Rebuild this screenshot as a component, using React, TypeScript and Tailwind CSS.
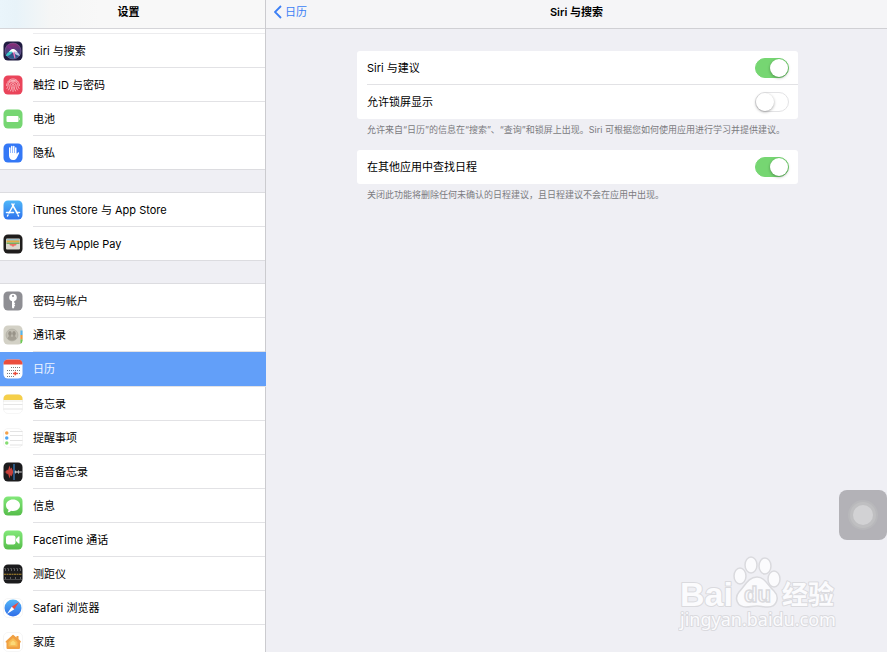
import React from "react";

interface TileProps {
  fill: string;
  stroke?: string;
  children?: React.ReactNode;
}

const Tile: React.FC<TileProps> = ({ fill, stroke = "none", children }) => (
  <svg viewBox="0 0 40 40" className="size-5 shrink-0" aria-hidden="true">
    <rect x="1" y="1" width="38" height="38" rx="9" fill={fill} stroke={stroke} />
    {children}
  </svg>
);

const SiriIcon = () => (
  <Tile fill="#1f1b40">
    <defs>
      <linearGradient id="siri" x1="0" y1="0" x2="0" y2="1">
        <stop offset="0" stopColor="#c4308c" />
        <stop offset="0.45" stopColor="#6a4a98" />
        <stop offset="1" stopColor="#1f7fb0" />
      </linearGradient>
    </defs>
    <circle cx="20" cy="20" r="16" fill="url(#siri)" opacity="0.7" />
    <circle cx="20" cy="20" r="16" fill="none" stroke="#8a6fa8" strokeWidth="1" />
    <path d="M21 18C14 18 8 24 5 30c8 0 13-4 16-12z" fill="#39d6d2" opacity="0.9" />
    <path d="M20 19c-8-3-12-8-13-12 7 2 11 6 13 12z" fill="#7a2d8c" />
    <path d="M20 18c6 1 12 6 14 12-8-1-12-5-14-12z" fill="#b9c8e8" />
    <path d="M19 20l4 15 2-2-3-14z" fill="#f279bd" />
    <path d="M12 22c3-5 6-6 8-6s5 1 9 6l-7-1-2 3-2-3z" fill="#fff" />
  </Tile>
);

const TouchIdIcon = () => (
  <Tile fill="#ea445a">
    <g fill="none" stroke="#fbc5cb" strokeWidth="1.7" strokeLinecap="round">
      <path d="M10 13c5-7 15-7 20 0" />
      <path d="M7 21c0-13 26-15 26 0" />
      <path d="M8 27c2-3 2-4 2-7 1-10 19-10 20 0 0 3 0 5 2 7" />
      <path d="M11 30c2-3 3-6 3-10 1-6 11-6 12 0 0 4 1 7 3 10" />
      <path d="M15 32c2-4 3-7 3-12 1-2 3-2 4 0 0 5 1 8 3 12" />
      <path d="M20 24v9" />
    </g>
  </Tile>
);

const BatteryIcon = () => (
  <Tile fill="#76d672">
    <rect x="7" y="14" width="24" height="12" rx="2" fill="#fff" />
    <path d="M32 17.500c2 .5 2 4.500 0 5z" fill="#fff" />
  </Tile>
);

const PrivacyIcon = () => (
  <Tile fill="#3478f6">
    <g fill="none" stroke="#fff" strokeWidth="3" strokeLinecap="round">
      <path d="M13.500 10v14" />
      <path d="M17.500 7v15" />
      <path d="M21.500 7v15" />
      <path d="M25.500 10v14" />
    </g>
    <path d="M12 20h15v3l2-3c1-2 4-2 3 1l-4 8c-2 4-4 5-8 5-5 0-8-4-8-9z" fill="#fff" />
  </Tile>
);

const AppStoreIcon = () => (
  <Tile fill="url(#store)">
    <defs>
      <linearGradient id="store" x1="0" y1="0" x2="0" y2="1">
        <stop offset="0" stopColor="#4fb7f8" />
        <stop offset="1" stopColor="#2f73ee" />
      </linearGradient>
    </defs>
    <g fill="none" stroke="#fff" strokeWidth="3" strokeLinecap="round">
      <path d="M22 8L12 26" />
      <path d="M18 8l11 19" />
      <path d="M7 25h14M27 25h6" />
      <path d="M10 30l-1 2M30 30l1 2" />
    </g>
  </Tile>
);

const WalletIcon = () => (
  <Tile fill="#1f1d1c">
    <rect x="6" y="9" width="28" height="22" rx="2" fill="#dcd9cf" />
    <path d="M7 11h26v2H7z" fill="#5aa6c8" />
    <path d="M7 13h26v4H7z" fill="#e2ad45" />
    <path d="M7 17h26v3H7z" fill="#79ad62" />
    <path d="M13 20h14c0 2-1 3-3 3h-1l-1 2h-4l-1-2h-1c-2 0-3-1-3-3z" fill="#ee7165" />
  </Tile>
);

const KeyIcon = () => (
  <Tile fill="#8e8e93">
    <circle cx="20" cy="13" r="7.500" fill="#fff" />
    <circle cx="20" cy="10" r="2" fill="#8e8e93" />
    <path d="M18 19h4.500v4l2 2-2 2 2 2-2 2v2l-2.500 2.500-2-2.500z" fill="#fff" />
  </Tile>
);

const ContactsIcon = () => (
  <Tile fill="#d3d1c6">
    <path d="M35 11h4v9h-4z" fill="#53b4ec" />
    <path d="M35 20h4v9h-4z" fill="#f09a3a" />
    <path d="M35 29h4v2q0 5-4 6z" fill="#6ccb52" />
    <circle cx="18" cy="20" r="12" fill="#c2bfb4" stroke="#a5a298" />
    <ellipse cx="14" cy="17" rx="3.500" ry="5" fill="#989489" />
    <ellipse cx="22" cy="17" rx="3.500" ry="5" fill="#989489" />
    <path d="M9 27c1-4 3-5 5-5 2 0 3 1 4 2 1-1 2-2 4-2s4 1 5 5c-3 3-6 4-9 4s-6-1-9-4z" fill="#a39f94" />
  </Tile>
);

const CalendarIcon = () => (
  <Tile fill="#fff">
    <path d="M1 11v-1q0-9 9-9h20q9 0 9 9v1z" fill="#eb4d3d" />
    <g stroke="#5c5c5c" strokeWidth="1.800" strokeDasharray="1.800 2.200" fill="none">
      <path d="M16 17h18" />
      <path d="M8 23h26" />
      <path d="M8 29h26" />
      <path d="M8 35h16" />
    </g>
    <path d="M20 29h9M24.500 25.500v7" stroke="#eb4d3d" strokeWidth="3" />
  </Tile>
);

const NotesIcon = () => (
  <Tile fill="#fff" stroke="#ececec">
    <path d="M1 12v-2q0-9 9-9h20q9 0 9 9v2z" fill="#f5cf4a" />
    <path d="M1 14h38" stroke="#b5b0a0" strokeWidth="1" strokeDasharray="2 2" />
    <path d="M1 21h38M1 30h38" stroke="#dcdcdc" strokeWidth="1.500" />
  </Tile>
);

const RemindersIcon = () => (
  <Tile fill="#fff" stroke="#ececec">
    <path d="M14 7h25M14 15h25M14 25h25M14 34h25" stroke="#dadada" strokeWidth="1.500" />
    <circle cx="7.500" cy="10" r="3.500" fill="#f3a14a" />
    <circle cx="7.500" cy="20" r="3.500" fill="#4fa7f5" />
    <circle cx="7.500" cy="30" r="3.500" fill="#85dc72" />
  </Tile>
);

const VoiceMemosIcon = () => (
  <Tile fill="#1b1b1d">
    <path d="M2 20l4-1 2-4 2 2 3-10 2 7 2-3 3 7v4l-3 7-2-3-2 7-3-10-2 2-2-4z" fill="#c8403a" />
    <path d="M22 4v32" stroke="#3c93e8" strokeWidth="2" />
    <path d="M23 20h15M25 17v6M28 18v4M31 16.500v7M34 19v2" stroke="#d9d9d9" strokeWidth="1.500" />
  </Tile>
);

const MessagesIcon = () => (
  <Tile fill="url(#msg)">
    <defs>
      <linearGradient id="msg" x1="0" y1="0" x2="0" y2="1">
        <stop offset="0" stopColor="#82e87a" />
        <stop offset="1" stopColor="#56bd4a" />
      </linearGradient>
    </defs>
    <path d="M20 7c8 0 14 5 14 11.500S28 30 20 30c-1 0-3 0-4-.5-2 2-4 3-7 3 1-1 2-3 2-5-3-2-5-5-5-9C6 12 12 7 20 7z" fill="#fff" />
  </Tile>
);

const FaceTimeIcon = () => (
  <Tile fill="url(#ft)">
    <defs>
      <linearGradient id="ft" x1="0" y1="0" x2="0" y2="1">
        <stop offset="0" stopColor="#82e87a" />
        <stop offset="1" stopColor="#56bd4a" />
      </linearGradient>
    </defs>
    <rect x="6" y="11" width="19" height="18" rx="4" fill="#fff" />
    <path d="M26 18l5-5q2-1 2 1v12q0 2-2 1l-5-5z" fill="#fff" />
  </Tile>
);

const MeasureIcon = () => (
  <Tile fill="#1b1b1d">
    <path d="M2 9h36" stroke="#777" strokeWidth="2" strokeDasharray="1 2" />
    <path d="M4 12h34" stroke="#a8a8a8" strokeWidth="4" strokeDasharray="1 5" />
    <path d="M2 20.500h36" stroke="#b0892e" strokeWidth="2" strokeDasharray="4 1" />
    <path d="M5 28h33" stroke="#a8a8a8" strokeWidth="4" strokeDasharray="1 9" />
    <path d="M2 31h36" stroke="#777" strokeWidth="2" strokeDasharray="1 1" />
  </Tile>
);

const SafariIcon = () => (
  <Tile fill="#fff" stroke="#ececec">
    <defs>
      <linearGradient id="safari" x1="0" y1="0" x2="0" y2="1">
        <stop offset="0" stopColor="#54b6f7" />
        <stop offset="1" stopColor="#2f6de8" />
      </linearGradient>
    </defs>
    <circle cx="20" cy="20" r="17" fill="url(#safari)" />
    <path d="M32 8L17.500 17.500l5 5z" fill="#ee4b3e" />
    <path d="M8 32l9.500-14.500 5 5z" fill="#fff" />
  </Tile>
);

const HomeIcon = () => (
  <Tile fill="#fff" stroke="#ececec">
    <path d="M19 6q1-1 2 0l6 5V8h4v6l4 4q2 2 0 3h-1v11q0 2-2 2H9q-2 0-2-2V21H6q-2-1 0-3z" fill="#f0a043" />
    <path d="M20 12l9 8v9H11v-9z" fill="#f7bd55" />
    <path d="M20 17l5 4v5H15v-5z" fill="#fbd877" />
  </Tile>
);

interface Item {
  label: string;
  icon: React.ReactNode;
}

const groups: Item[][] = [
  [
    { label: "Siri 与搜索", icon: <SiriIcon /> },
    { label: "触控 ID 与密码", icon: <TouchIdIcon /> },
    { label: "电池", icon: <BatteryIcon /> },
    { label: "隐私", icon: <PrivacyIcon /> },
  ],
  [
    { label: "iTunes Store 与 App Store", icon: <AppStoreIcon /> },
    { label: "钱包与 Apple Pay", icon: <WalletIcon /> },
  ],
  [
    { label: "密码与帐户", icon: <KeyIcon /> },
    { label: "通讯录", icon: <ContactsIcon /> },
    { label: "日历", icon: <CalendarIcon /> },
    { label: "备忘录", icon: <NotesIcon /> },
    { label: "提醒事项", icon: <RemindersIcon /> },
    { label: "语音备忘录", icon: <VoiceMemosIcon /> },
    { label: "信息", icon: <MessagesIcon /> },
    { label: "FaceTime 通话", icon: <FaceTimeIcon /> },
    { label: "测距仪", icon: <MeasureIcon /> },
    { label: "Safari 浏览器", icon: <SafariIcon /> },
    { label: "家庭", icon: <HomeIcon /> },
  ],
];

interface SidebarRowProps {
  item: Item;
  active: boolean;
  last: boolean;
}

const SidebarRow: React.FC<SidebarRowProps> = ({ item, active, last }) => (
  <li className={active ? "border-b border-[#e2e2e5]" : "mr-px"}>
    <button
      type="button"
      className={`flex h-[34px] w-full items-center gap-[10px] pl-[3px] text-left ${
        active ? "bg-[#629ff9] text-white/90" : "bg-white text-black"
      } ${last ? "border-b border-[#dcdce0]" : ""}`}
    >
      {item.icon}
      <span
        className={`flex h-full flex-1 items-center ${
          active || last ? "" : "border-b border-[#e2e2e5]"
        }`}
      >
        {item.label}
      </span>
    </button>
  </li>
);

const Sidebar = () => (
  <aside className="flex w-[266px] shrink-0 flex-col bg-[#cbcbcf]">
    <header className="mr-px flex h-[29px] shrink-0 items-center justify-center border-b border-[#d5d5d9] bg-[linear-gradient(to_right,#eaf5fb_0px,#e8f3f9_16px,#f5f6f6_50px,#f8f8f8_100px)] pr-2 pb-1">
      <h1 className="font-semibold">设置</h1>
    </header>
    <nav className="min-h-0 flex-1 overflow-y-auto [scrollbar-width:none]">
      <div className="mr-px h-[5px] bg-white pl-[33px]">
        <div className="h-full border-b border-[#ececee]" />
      </div>
      {groups.map((group, g) => (
        <ul key={g}>
          {g > 0 && (
            <li
              aria-hidden="true"
              className="mr-px h-[23px] border-b border-[#dcdce0] bg-[#efeff4]"
            />
          )}
          {group.map((item, i) => (
            <SidebarRow
              key={item.label}
              item={item}
              active={item.label === "日历"}
              last={i === group.length - 1}
            />
          ))}
        </ul>
      ))}
    </nav>
  </aside>
);

interface SwitchRowProps {
  label: string;
  on?: boolean;
  divider?: boolean;
}

const SwitchRow: React.FC<SwitchRowProps> = ({ label, on = false, divider = false }) => (
  <label className="flex h-[34px] items-center pl-[10px]">
    <span
      className={`flex h-full flex-1 items-center justify-between pr-[9px] ${
        divider ? "border-b border-[#e2e2e5]" : ""
      }`}
    >
      {label}
      <input
        type="checkbox"
        role="switch"
        defaultChecked={on}
        className="h-5 w-[34px] appearance-none rounded-full border border-[#e3e3e5] bg-white before:block before:size-[18px] before:rounded-full before:bg-white before:shadow-[0_1px_3px_rgba(0,0,0,0.35)] before:content-[''] checked:border-[#76d672] checked:bg-[#76d672] checked:before:translate-x-[14px]"
      />
    </span>
  </label>
);

const Detail = () => (
  <main className="flex min-w-0 flex-1 flex-col">
    <header className="grid h-[29px] shrink-0 grid-cols-[1fr_auto_1fr] items-center border-b border-[#d0d0d4] bg-[#f5f5f7] pb-1">
      <a href="#calendar" className="flex items-center gap-[3px] pl-2 text-[#3b7ff5]">
        <svg viewBox="0 0 8 14" className="h-[14px] w-2" aria-hidden="true">
          <path d="M7 1L1 7l6 6" fill="none" stroke="currentColor" strokeWidth="1.800" />
        </svg>
        日历
      </a>
      <h2 className="font-semibold">Siri 与搜索</h2>
    </header>

    <div className="pt-[22px] pr-[89px] pl-[91px]">
      <div className="rounded-[3px] bg-white">
        <SwitchRow label="Siri 与建议" on divider />
        <SwitchRow label="允许锁屏显示" />
      </div>
      <p className="px-[10px] pt-[5px] pb-[14px] text-[9px] leading-3 text-[#7b7b80]">
        允许来自“日历”的信息在“搜索”、“查询”和锁屏上出现。Siri 可根据您如何使用应用进行学习并提供建议。
      </p>
      <div className="rounded-[3px] bg-white">
        <SwitchRow label="在其他应用中查找日程" on />
      </div>
      <p className="px-[10px] pt-[5px] text-[9px] leading-3 text-[#7b7b80]">
        关闭此功能将删除任何未确认的日程建议，且日程建议不会在应用中出现。
      </p>
    </div>
  </main>
);

const Watermark = () => (
  <svg
    viewBox="0 0 164 80"
    className="pointer-events-none absolute right-[45px] bottom-5 h-20 w-[164px]"
    role="img"
    aria-label="Baidu 经验"
  >
    <g fill="#fbfbfd" stroke="#dadade" strokeWidth="1.500">
      <ellipse cx="62" cy="24" rx="6" ry="8" />
      <ellipse cx="73" cy="13" rx="6" ry="8" />
      <ellipse cx="87" cy="14" rx="6" ry="8" />
      <ellipse cx="96" cy="27" rx="6" ry="8" />
      <path d="M79 25c8 0 11 9 17 14 6 6 3 16-6 16-5 0-7-1-11-1s-7 1-11 1c-9 0-12-9-7-15 6-6 9-15 18-15z" />
      <g paintOrder="stroke" strokeWidth="2" strokeLinejoin="round">
        <text x="2" y="54" className="font-['Liberation_Sans',sans-serif] text-[34px] font-bold">
          Bai
        </text>
        <text x="104" y="52" className="font-['Noto_Sans_CJK_SC',sans-serif] text-[26px] font-bold">
          经验
        </text>
        <text x="2" y="74" className="font-['Noto_Sans',sans-serif] text-[18px]">
          jingyan.baidu.com
        </text>
      </g>
      <text x="66" y="50" className="font-['Liberation_Sans',sans-serif] text-[22px] font-bold">
        du
      </text>
    </g>
  </svg>
);

const AssistiveTouch = () => (
  <button
    type="button"
    aria-label="AssistiveTouch"
    className="absolute right-0 bottom-[112px] flex h-[50px] w-12 items-center justify-center rounded-lg bg-[#b3b2b7]"
  >
    <span className="rounded-full bg-[#b8b8bb] p-[2px]">
      <span className="block rounded-full bg-[#bfbfc1] p-[3px]">
        <span className="block size-5 rounded-full bg-[#d2d2d4]" />
      </span>
    </span>
  </button>
);

const App = () => (
  <div className="relative flex h-screen overflow-hidden bg-[#efeff4] font-['Inter','Noto_Sans_CJK_SC',sans-serif] text-[11px] leading-4 text-black">
    <Sidebar />
    <Detail />
    <Watermark />
    <AssistiveTouch />
  </div>
);

export default App;
